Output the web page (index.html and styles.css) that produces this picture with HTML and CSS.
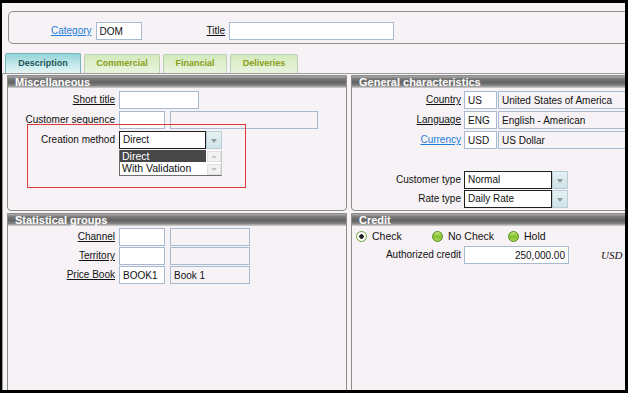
FILE: index.html
```html
<!DOCTYPE html>
<html lang="en">

<head>
  <meta charset="UTF-8" />
  <title>Customer</title>
  <link rel="stylesheet" href="styles.css">
</head>

<body>
  <div class="screen">
    <div class="head-box">
      <a class="lnk cat-lbl">Category</a>
      <input class="inp w46" value="DOM" />
      <span class="lbl u title-lbl">Title</span>
      <input class="inp w165" value="" />
    </div>

    <div class="tabs">
      <div class="tab tab-on w-desc">Description</div>
      <div class="tab w-com">Commercial</div>
      <div class="tab w-fin">Financial</div>
      <div class="tab w-del">Deliveries</div>
    </div>

    <div class="tab-body">
      <div class="col col-left">
        <div class="group group-top">
          <div class="bar">Miscellaneous</div>
          <div class="form form-left pad3">
            <span class="lbl u">Short title</span>
            <div class="ctl"><input class="inp w80" value="" /></div>

            <span class="lbl">Customer sequence</span>
            <div class="ctl"><input class="inp w46" value="" /><input class="inp off w148" value="" /></div>

            <span class="lbl">Creation method</span>
            <div class="ctl">
              <div class="sel-wrap">
                <div class="sel">
                  <span class="sel-val w87">Direct</span>
                  <span class="sel-btn"></span>
                </div>
                <div class="drop">
                  <div class="drop-items">
                    <div class="drop-item picked">Direct</div>
                    <div class="drop-item">With Validation</div>
                  </div>
                  <div class="drop-scroll">
                    <span class="sc-btn sc-up"></span>
                    <span class="sc-btn sc-down"></span>
                  </div>
                </div>
              </div>
            </div>
          </div>
          <div class="mark"></div>
        </div>

        <div class="group group-bottom">
          <div class="bar">Statistical groups</div>
          <div class="form form-left pad2 tight-rows">
            <span class="lbl u">Channel</span>
            <div class="ctl"><input class="inp w46" value="" /><input class="inp off w80" value="" /></div>

            <span class="lbl u">Territory</span>
            <div class="ctl"><input class="inp w46" value="" /><input class="inp off w80" value="" /></div>

            <span class="lbl u">Price Book</span>
            <div class="ctl"><input class="inp w46" value="BOOK1" /><input class="inp off w80" value="Book 1" /></div>
          </div>
        </div>
      </div>

      <div class="col col-right">
        <div class="group group-top">
          <div class="bar">General characteristics</div>
          <div class="form form-right pad3">
            <span class="lbl u">Country</span>
            <div class="ctl gap1"><input class="inp w33" value="US" /><input class="inp off w140" value="United States of America" /></div>

            <span class="lbl u">Language</span>
            <div class="ctl gap1"><input class="inp w33" value="ENG" /><input class="inp off w140" value="English - American" /></div>

            <a class="lbl lnk">Currency</a>
            <div class="ctl gap1"><input class="inp w33" value="USD" /><input class="inp off w140" value="US Dollar" /></div>

            <span class="lbl"></span>
            <div class="ctl"></div>

            <span class="lbl">Customer type</span>
            <div class="ctl">
              <div class="sel">
                <span class="sel-val w88">Normal</span>
                <span class="sel-btn"></span>
              </div>
            </div>

            <span class="lbl nudge">Rate type</span>
            <div class="ctl nudge">
              <div class="sel">
                <span class="sel-val w88">Daily Rate</span>
                <span class="sel-btn"></span>
              </div>
            </div>
          </div>
        </div>

        <div class="group group-bottom">
          <div class="bar">Credit</div>
          <div class="radios">
            <label class="opt"><span class="radio on"></span>Check</label>
            <label class="opt"><span class="radio"></span>No Check</label>
            <label class="opt"><span class="radio"></span>Hold</label>
          </div>
          <div class="form form-right credit-row">
            <span class="lbl">Authorized credit</span>
            <div class="ctl">
              <input class="inp w105 num" value="250,000.00" />
              <span class="cur">USD</span>
            </div>
          </div>
        </div>
      </div>
    </div>
  </div>
</body>

</html>
```

FILE: styles.css
```css
* {
  box-sizing: border-box;
}

body {
  margin: 0;
  background: #000;
  font-family: 'Liberation Sans', Arial, sans-serif;
  font-size: 10px;
  color: #111;
}

.screen {
  margin: 3px 0 0 2px;
  width: 623px;
  height: 387px;
  background: #f6f2f5;
  overflow: hidden;
}

/* header block */

.head-box {
  display: flex;
  align-items: flex-start;
  margin: 8px 0 0 6px;
  width: 640px;
  height: 33px;
  padding: 10px 0 0 42px;
  border: 1px solid #8f8f8f;
  border-radius: 5px;
}

.cat-lbl {
  margin-right: 4px;
}

.title-lbl {
  margin: 0 4px 0 65px;
}

.lbl {
  line-height: 18px;
  white-space: nowrap;
  text-align: right;
}

.u {
  text-decoration: underline;
}

.lnk {
  color: #1d7fd8;
  text-decoration: underline;
  line-height: 18px;
}

.inp {
  display: block;
  height: 18px;
  padding: 0 3px;
  border: 1px solid #a7bacf;
  background: #fff;
  font-family: inherit;
  font-size: 10px;
  color: #111;
  outline: none;
}

.inp.off {
  background: #f6f2f5;
}

.inp.num {
  text-align: right;
}

.w33 { width: 33px; }
.w46 { width: 46px; }
.w80 { width: 80px; }
.w105 { width: 105px; }
.w140 { width: 140px; }
.w148 { width: 148px; }
.w165 { width: 165px; }

/* tabs */

.tabs {
  display: flex;
  gap: 3px;
  align-items: flex-end;
  height: 19px;
  margin-top: 10px;
  padding-left: 3px;
}

.tab {
  height: 19px;
  line-height: 17px;
  text-align: center;
  font-size: 9px;
  font-weight: 700;
  color: #8a9d17;
  border: 1px solid #bcd0b4;
  border-bottom: none;
  border-radius: 2px 2px 0 0;
  background: linear-gradient(#d3ebbd, #e9f4de);
}

.tab-on {
  height: 20px;
  line-height: 19px;
  color: #1c5656;
  border-color: #74b5b8;
  background: linear-gradient(#93d3d7, #c9ebec 60%, #e6f5f5);
}

.w-desc { width: 76px; }
.w-com { width: 76px; }
.w-fin { width: 64px; }
.w-del { width: 68px; }

.tab-body {
  display: flex;
  gap: 4px;
  padding: 1px 0 0 4px;
  border-top: 1px solid #9c9c9c;
  border-left: 1px solid #9c9c9c;
}

.col {
  display: flex;
  flex-direction: column;
  gap: 2px;
}

.col-left {
  width: 340px;
  flex: none;
}

.col-right {
  width: 290px;
  flex: none;
}

.group {
  position: relative;
  border: 1px solid #8c8c8c;
  border-radius: 0 0 4px 4px;
}

.group-top {
  height: 136px;
}

.group-bottom {
  height: 210px;
}

.bar {
  height: 12px;
  padding-left: 7px;
  line-height: 12px;
  font-size: 11px;
  font-weight: 700;
  color: #fff;
  background: linear-gradient(#ababab 0%, #767676 25%, #636363 55%, #868686 80%, #d4d4d4 100%);
}

/* field grids */

.form {
  display: grid;
  row-gap: 2px;
  align-items: center;
}

.form-left {
  grid-template-columns: 107px 1fr;
  column-gap: 4px;
}

.form-right {
  grid-template-columns: 109px 1fr;
  column-gap: 3px;
}

.pad3 {
  padding-top: 3px;
}

.pad2 {
  padding-top: 2px;
}

.tight-rows {
  row-gap: 1px;
}

.form > .lbl,
.form > .ctl {
  min-height: 18px;
}

.ctl {
  display: flex;
  gap: 5px;
  align-items: center;
}

.ctl.gap1 {
  gap: 1px;
}

.nudge {
  margin-top: -1px;
}

/* combo boxes */

.sel-wrap {
  position: relative;
}

.sel {
  display: flex;
  height: 18px;
}

.sel-val {
  height: 18px;
  padding-left: 3px;
  line-height: 16px;
  border: 1px solid #1e1e1e;
  background: #fff;
}

.w87 { width: 87px; }
.w88 { width: 88px; }

.sel-btn {
  position: relative;
  width: 16px;
  height: 18px;
  border: 1px solid #b9ced5;
  background: linear-gradient(#e4f1f3, #cfe3e8);
}

.sel-btn::after {
  content: '';
  position: absolute;
  left: 4px;
  top: 7px;
  border-top: 4px solid #8b9ca2;
  border-left: 3px solid transparent;
  border-right: 3px solid transparent;
}

.drop {
  position: absolute;
  top: 19px;
  left: 0;
  display: flex;
  width: 103px;
  height: 26px;
  border: 1px solid #6d6d6d;
  border-top: none;
  border-right-color: #c9c9c9;
  background: #fff;
  z-index: 2;
}

.drop-items {
  width: 87px;
}

.drop-item {
  height: 12px;
  padding-left: 2px;
  line-height: 12px;
  font-size: 10.5px;
}

.drop-item.picked {
  background: #474747;
  color: #fff;
}

.drop-scroll {
  display: flex;
  flex-direction: column;
  justify-content: space-between;
  width: 15px;
  padding: 1px 0 0 1px;
}

.sc-btn {
  position: relative;
  height: 11px;
  border: 1px solid #e0e0e0;
  background: #f2f2f2;
}

.sc-btn::after {
  content: '';
  position: absolute;
  left: 3px;
  top: 3px;
  border-left: 3px solid transparent;
  border-right: 3px solid transparent;
}

.sc-up::after {
  border-bottom: 3px solid #c4c4c4;
}

.sc-down::after {
  border-top: 3px solid #c4c4c4;
}

.mark {
  position: absolute;
  left: 19px;
  top: 48px;
  width: 219px;
  height: 64px;
  border: 1px solid #e23a3a;
}

/* credit */

.radios {
  display: grid;
  grid-template-columns: 76px 76px 76px;
  padding: 4px 0 0 4px;
  height: 17px;
}

.opt {
  display: flex;
  align-items: center;
  gap: 5px;
  font-size: 10.5px;
  line-height: 13px;
}

.radio {
  width: 11px;
  height: 11px;
  border-radius: 50%;
  border: 1px solid #4f8c1d;
  background: linear-gradient(#c4e878, #84c132 50%, #a9d85a);
}

.radio.on {
  border-color: #6aa436;
  background: radial-gradient(circle, #1f1f1f 0 2px, #fff 2.5px);
}

.credit-row {
  margin-top: 3px;
}

.cur {
  margin-left: 27px;
  font-family: 'Liberation Serif', 'Times New Roman', serif;
  font-style: italic;
  font-size: 11px;
}
```
